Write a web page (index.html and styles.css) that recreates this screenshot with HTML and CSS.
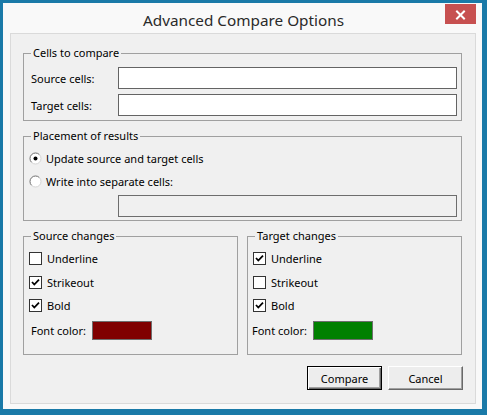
FILE: index.html
```html
<!DOCTYPE html>
<html>
<head>
<meta charset="utf-8">
<title>Advanced Compare Options</title>
<link rel="stylesheet" href="styles.css">
</head>
<body>
<div class="window">
  <div class="titlebar">
    <span class="title">Advanced Compare Options</span>
    <button class="close" aria-label="Close">
      <svg width="31" height="20" viewBox="0 0 31 20"><path d="M12 7.5 L19 14.5 M19 7.5 L12 14.5" stroke="#fff" stroke-width="2" stroke-linecap="square" fill="none"/></svg>
    </button>
  </div>
  <div class="panel">
    <div class="group group-cells">
      <span class="legend">Cells to compare</span>
      <div class="field-row"><span class="label">Source cells:</span><span class="input"></span></div>
      <div class="field-row gap"><span class="label">Target cells:</span><span class="input"></span></div>
    </div>

    <div class="group group-placement">
      <span class="legend">Placement of results</span>
      <div class="option-row">
        <span class="radio">
          <svg width="13" height="13" viewBox="0 0 13 13"><circle cx="6.5" cy="6.5" r="5.5" fill="#fff"/><path d="M2.6 10.4 A5.5 5.5 0 0 1 10.4 2.6" stroke="#6e6e6e" stroke-width="1" fill="none"/><path d="M10.4 2.6 A5.5 5.5 0 0 1 2.6 10.4" stroke="#d4d4d4" stroke-width="1" fill="none"/><circle cx="6.5" cy="6.5" r="2" fill="#000"/></svg>
        </span>
        <span class="option-text">Update source and target cells</span>
      </div>
      <div class="option-row">
        <span class="radio">
          <svg width="13" height="13" viewBox="0 0 13 13"><circle cx="6.5" cy="6.5" r="5.5" fill="#fff"/><path d="M2.6 10.4 A5.5 5.5 0 0 1 10.4 2.6" stroke="#6e6e6e" stroke-width="1" fill="none"/><path d="M10.4 2.6 A5.5 5.5 0 0 1 2.6 10.4" stroke="#d4d4d4" stroke-width="1" fill="none"/></svg>
        </span>
        <span class="option-text">Write into separate cells:</span>
      </div>
      <span class="input input-disabled"></span>
    </div>

    <div class="pair">
      <div class="group group-changes">
        <span class="legend">Source changes</span>
        <div class="check-row"><span class="checkbox"></span><span class="option-text">Underline</span></div>
        <div class="check-row tall"><span class="checkbox"><svg width="11" height="11" viewBox="0 0 11 11"><path d="M2 5 L4.3 7.5 L9 2.6" stroke="#000" stroke-width="1.8" fill="none"/></svg></span><span class="option-text">Strikeout</span></div>
        <div class="check-row"><span class="checkbox"><svg width="11" height="11" viewBox="0 0 11 11"><path d="M2 5 L4.3 7.5 L9 2.6" stroke="#000" stroke-width="1.8" fill="none"/></svg></span><span class="option-text">Bold</span></div>
        <div class="color-row"><span class="label">Font color:</span><span class="swatch swatch-red"></span></div>
      </div>
      <div class="group group-changes group-target">
        <span class="legend">Target changes</span>
        <div class="check-row"><span class="checkbox"><svg width="11" height="11" viewBox="0 0 11 11"><path d="M2 5 L4.3 7.5 L9 2.6" stroke="#000" stroke-width="1.8" fill="none"/></svg></span><span class="option-text">Underline</span></div>
        <div class="check-row tall"><span class="checkbox"></span><span class="option-text">Strikeout</span></div>
        <div class="check-row"><span class="checkbox"><svg width="11" height="11" viewBox="0 0 11 11"><path d="M2 5 L4.3 7.5 L9 2.6" stroke="#000" stroke-width="1.8" fill="none"/></svg></span><span class="option-text">Bold</span></div>
        <div class="color-row"><span class="label">Font color:</span><span class="swatch swatch-green"></span></div>
      </div>
    </div>

    <div class="buttons">
      <button class="btn btn-default">Compare</button>
      <button class="btn">Cancel</button>
    </div>
  </div>
</div>
</body>
</html>
```

FILE: styles.css
```css
* { box-sizing: border-box; }

html, body {
  margin: 0;
  padding: 0;
  background: #1a7aa8;
}

body {
  font-family: "Noto Sans", "Open Sans", sans-serif;
  font-size: 11px;
  color: #000;
}

.window {
  width: 487px;
  height: 415px;
  border-style: solid;
  border-color: #1a7aa8;
  border-width: 3px 5px 6px 3px;
  background: #f9f9f9;
  display: flex;
  flex-direction: column;
}

.titlebar {
  position: relative;
  height: 30px;
  display: flex;
  align-items: center;
  justify-content: center;
  padding-top: 4px;
  padding-left: 2px;
}

.title {
  font-size: 15.3px;
  color: #2a2a2a;
  line-height: 20px;
}

.close {
  position: absolute;
  top: 1px;
  right: 6px;
  width: 31px;
  height: 20px;
  border: 0;
  padding: 0;
  margin: 0;
  background: #c75050;
  display: block;
}

.close svg { display: block; }

.panel {
  flex: 1;
  margin: 0 6px 5px 7px;
  border: 1px solid #dadada;
  background: #f0f0f0;
  padding: 19px 13px 13px 12px;
  display: flex;
  flex-direction: column;
}

.group {
  position: relative;
  border: 1px solid #a0a0a0;
}

.legend {
  position: absolute;
  top: -9px;
  left: 7px;
  padding: 0 2px;
  background: #f0f0f0;
  line-height: 16px;
}

.group-cells {
  height: 68px;
  padding: 13px 4px 4px 0;
}

.field-row {
  display: grid;
  grid-template-columns: 94px 1fr;
  align-items: center;
  height: 22px;
}

.field-row.gap { margin-top: 5px; }

.label {
  padding-left: 7px;
  white-space: nowrap;
}

.input {
  display: block;
  height: 22px;
  border: 1px solid #646464;
  background: #fff;
}

.group-placement {
  margin-top: 15px;
  height: 85px;
  padding: 10px 4px 3px 0;
}

.option-row {
  display: flex;
  align-items: center;
  height: 23px;
  padding-left: 5px;
}

.radio {
  width: 13px;
  height: 13px;
  display: block;
}

.radio svg { display: block; }

.option-text {
  margin-left: 4px;
  white-space: nowrap;
}

.input-disabled {
  margin-top: 2px;
  margin-left: 94px;
  background: #f0f0f0;
  border-color: #6d6d6d;
}

.pair {
  margin-top: 15px;
  display: flex;
  gap: 9px;
}

.group-changes {
  width: 215px;
  height: 119px;
  padding: 10px 0 14px 0;
}

.check-row {
  display: flex;
  align-items: center;
  height: 23px;
  padding-left: 5px;
}

.check-row.tall { height: 24px; }

.check-row .option-text { margin-left: 5px; }

.checkbox {
  width: 13px;
  height: 13px;
  border: 1px solid #333;
  background: #fff;
  display: block;
}

.checkbox svg { display: block; }

.color-row {
  margin-top: 4px;
  display: grid;
  grid-template-columns: 68px 60px;
  align-items: center;
}

.group-target .color-row { grid-template-columns: 65px 60px; }
.group-target .color-row .label { padding-left: 4px; }

.swatch {
  display: block;
  width: 60px;
  height: 19px;
  border: 1px solid #6e6e6e;
}

.swatch-red { background: #800000; }
.swatch-green { background: #008000; }

.buttons {
  margin-top: 11px;
  margin-right: -1px;
  display: flex;
  justify-content: flex-end;
  gap: 6px;
}

.btn {
  width: 75px;
  height: 24px;
  margin: 0;
  padding: 0;
  font-family: "Noto Sans", "Open Sans", sans-serif;
  font-size: 11px;
  color: #000;
  background: #ededed;
  border: 1px solid;
  border-color: #fff #696969 #696969 #fff;
  box-shadow: inset -1px -1px 0 #a0a0a0;
}

.btn-default {
  border-color: #000;
  box-shadow: inset 1px 1px 0 #fff, inset -1px -1px 0 #696969, inset -2px -2px 0 #a0a0a0;
}
```
